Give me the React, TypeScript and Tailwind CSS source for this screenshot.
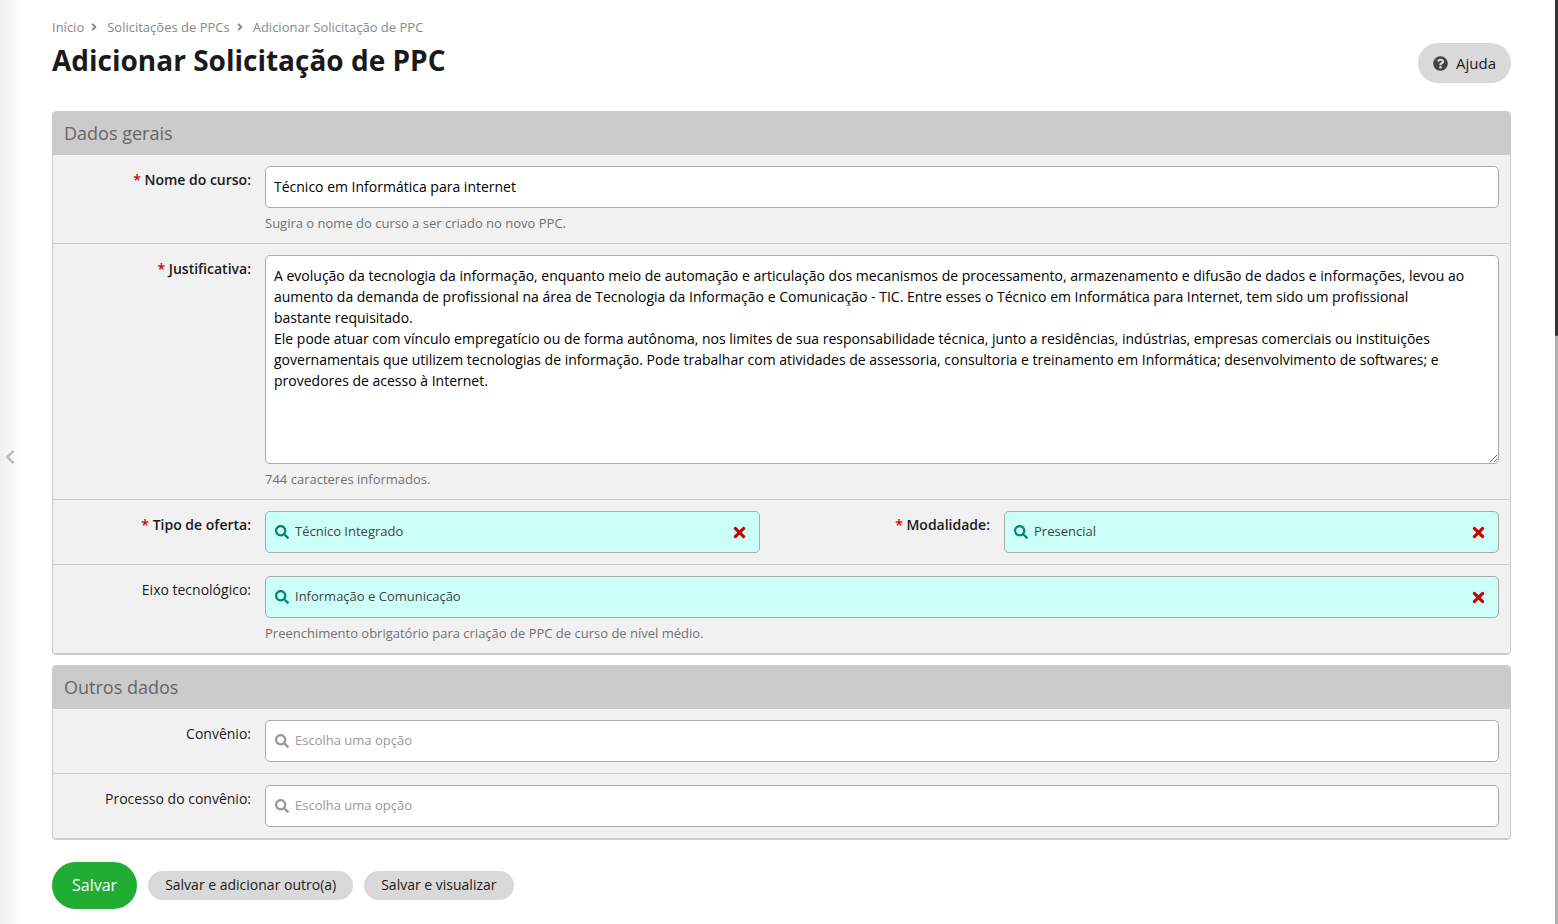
import { useState, type ReactNode } from 'react';
import { FaAngleRight, FaChevronLeft, FaQuestionCircle, FaSearch, FaTimes } from 'react-icons/fa';

const JUSTIFICATIVA = `A evolução da tecnologia da informação, enquanto meio de automação e articulação dos mecanismos de processamento, armazenamento e difusão de dados e informações, levou ao aumento da demanda de profissional na área de Tecnologia da Informação e Comunicação - TIC. Entre esses o Técnico em Informática para Internet, tem sido um profissional bastante requisitado.
Ele pode atuar com vínculo empregatício ou de forma autônoma, nos limites de sua responsabilidade técnica, junto a residências, indústrias, empresas comerciais ou instituições governamentais que utilizem tecnologias de informação. Pode trabalhar com atividades de assessoria, consultoria e treinamento em Informática; desenvolvimento de softwares; e provedores de acesso à Internet.`;

interface FieldProps {
  id: string;
  label: string;
  required?: boolean;
  help?: string;
  children: ReactNode;
}

interface SearchSelectProps {
  id: string;
  initial?: string;
}

function Fieldset({ title, children }: { title: string; children: ReactNode }) {
  return (
    <section className="overflow-hidden rounded border border-[#cbcbcb] bg-[#f1f1f1]">
      <h2 className="bg-[#cbcbcb] px-[11px] py-[9px] text-[18px] leading-[25px] text-[#666]">{title}</h2>
      {children}
    </section>
  );
}

function Row({ children }: { children: ReactNode }) {
  return <div className="flex gap-8 border-b border-[#cbcbcb] py-[11px] pr-[11px]">{children}</div>;
}

function Field({ id, label, required = false, help, children }: FieldProps) {
  return (
    <div className="flex min-w-0 flex-1 gap-[14px]">
      <label
        htmlFor={id}
        className={`w-[198px] shrink-0 pt-[3px] text-right leading-[21px] ${required ? 'font-semibold' : ''}`}
      >
        {required && <span className="text-[#c00]">* </span>}
        {label}:
      </label>
      <div className="min-w-0 flex-1">
        {children}
        {help && <p className="mt-[6px] text-[13px] leading-[18px] text-[#717171]">{help}</p>}
      </div>
    </div>
  );
}

// Autocomplete box: teal when something is picked, white when empty
function SearchSelect({ id, initial = '' }: SearchSelectProps) {
  const [value, setValue] = useState(initial);
  const filled = value !== '';

  return (
    <div
      className={`flex h-[42px] items-center rounded-[5px] border border-[#aaa] pr-[11px] pl-[9px] ${
        filled ? 'bg-[#ccfff8]' : 'bg-white'
      }`}
    >
      <FaSearch size={14} className={filled ? 'text-[#008575]' : 'text-[#999]'} />
      <input
        id={id}
        type="text"
        value={value}
        placeholder="Escolha uma opção"
        onChange={(e) => setValue(e.target.value)}
        className="ml-[6px] min-w-0 flex-1 bg-transparent text-[13px] text-[#444] outline-none placeholder:text-[#999]"
      />
      {filled && (
        <button type="button" aria-label="Limpar" onClick={() => setValue('')} className="text-[#c00]">
          <FaTimes size={17} />
        </button>
      )}
    </div>
  );
}

function Breadcrumbs() {
  return (
    <nav className="flex items-center text-[13px] leading-[18px] text-[#888]">
      <a href="#inicio">Início</a>
      <FaAngleRight size={12} className="mr-[7px] ml-1" />
      <a href="#solicitacoes">Solicitações de PPCs</a>
      <FaAngleRight size={12} className="mr-[7px] ml-1" />
      <a href="#adicionar">Adicionar Solicitação de PPC</a>
    </nav>
  );
}

export default function App() {
  const [nome, setNome] = useState('Técnico em Informática para internet');
  const [justificativa, setJustificativa] = useState(JUSTIFICATIVA);

  return (
    <div className="flex min-h-screen bg-white font-['Open_Sans',sans-serif] text-[14px] text-[#1a1a1a]">
      {/* Collapsed side menu */}
      <aside className="flex w-[22px] shrink-0 items-center bg-linear-to-r from-[#f0f0f0] to-white pb-[10px] pl-[2px]">
        <button type="button" aria-label="Abrir menu" className="text-[#bbb]">
          <FaChevronLeft size={16} />
        </button>
      </aside>

      <main className="min-w-0 flex-1 pt-[18px] pr-11 pb-[15px] pl-[30px]">
        <Breadcrumbs />
        <header className="mb-7 flex items-start justify-between">
          <h1 className="pt-1 text-[28px] leading-10 font-bold">Adicionar Solicitação de PPC</h1>
          <a
            href="#ajuda"
            className="mt-[7px] flex h-10 items-center gap-2 rounded-full bg-[#d9d9d9] px-[15px] text-[15px]"
          >
            <FaQuestionCircle size={15} className="text-[#444]" />
            Ajuda
          </a>
        </header>

        <form onSubmit={(e) => e.preventDefault()}>
          <div className="flex flex-col gap-[10px]">
            <Fieldset title="Dados gerais">
              <Row>
                <Field id="nome" label="Nome do curso" required help="Sugira o nome do curso a ser criado no novo PPC.">
                  <input
                    id="nome"
                    type="text"
                    value={nome}
                    onChange={(e) => setNome(e.target.value)}
                    className="block h-[42px] w-full rounded-[5px] border border-[#aaa] bg-white px-2 pb-[2px] text-black"
                  />
                </Field>
              </Row>
              <Row>
                <Field id="justificativa" label="Justificativa" required help="744 caracteres informados.">
                  <textarea
                    id="justificativa"
                    value={justificativa}
                    onChange={(e) => setJustificativa(e.target.value)}
                    className="block h-[209px] w-full rounded-[5px] border border-[#aaa] bg-white py-[9px] pr-[31px] pl-2 leading-[21px] text-black"
                  />
                </Field>
              </Row>
              <Row>
                <Field id="tipo" label="Tipo de oferta" required>
                  <SearchSelect id="tipo" initial="Técnico Integrado" />
                </Field>
                <Field id="modalidade" label="Modalidade" required>
                  <SearchSelect id="modalidade" initial="Presencial" />
                </Field>
              </Row>
              <Row>
                <Field
                  id="eixo"
                  label="Eixo tecnológico"
                  help="Preenchimento obrigatório para criação de PPC de curso de nível médio."
                >
                  <SearchSelect id="eixo" initial="Informação e Comunicação" />
                </Field>
              </Row>
            </Fieldset>

            <Fieldset title="Outros dados">
              <Row>
                <Field id="convenio" label="Convênio">
                  <SearchSelect id="convenio" />
                </Field>
              </Row>
              <Row>
                <Field id="processo" label="Processo do convênio">
                  <SearchSelect id="processo" />
                </Field>
              </Row>
            </Fieldset>
          </div>

          <div className="mt-[22px] flex items-center gap-[11px]">
            <button type="submit" className="h-[47px] rounded-full bg-[#21ad33] px-5 pb-[2px] text-[16px] text-white">
              Salvar
            </button>
            <button type="submit" className="h-[29px] rounded-full bg-[#d9d9d9] px-[17px] pb-[2px]">
              Salvar e adicionar outro(a)
            </button>
            <button type="submit" className="h-[29px] rounded-full bg-[#d9d9d9] px-[17px] pb-[2px]">
              Salvar e visualizar
            </button>
          </div>
        </form>
      </main>

      {/* Scroll track */}
      <div className="w-[3px] shrink-0 bg-[#b0b0b0]">
        <div className="h-[336px] rounded-b-sm bg-[#333]" />
      </div>
    </div>
  );
}
